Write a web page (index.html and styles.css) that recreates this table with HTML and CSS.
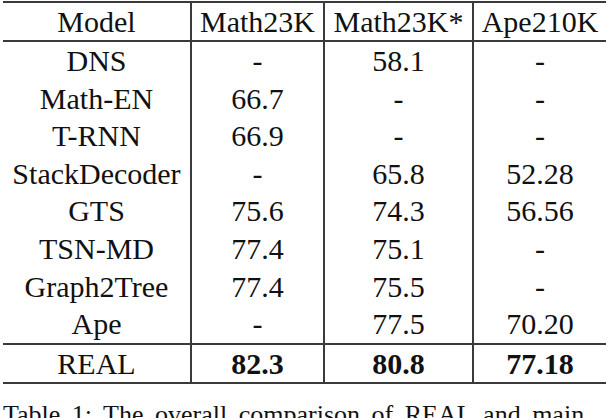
FILE: index.html
```html
<!DOCTYPE html>
<html lang="en">
<head>
    <meta charset="UTF-8">
    <meta name="viewport" content="width=device-width, initial-scale=1.0">
    <title>Results Table</title>
    <link rel="stylesheet" href="styles.css">
</head>
<body>
    <table class="results">
        <thead>
            <tr>
                <th>Model</th>
                <th>Math23K</th>
                <th>Math23K*</th>
                <th>Ape210K</th>
            </tr>
        </thead>
        <tbody>
            <tr><td>DNS</td><td>-</td><td>58.1</td><td>-</td></tr>
            <tr><td>Math-EN</td><td>66.7</td><td>-</td><td>-</td></tr>
            <tr><td>T-RNN</td><td>66.9</td><td>-</td><td>-</td></tr>
            <tr><td>StackDecoder</td><td>-</td><td>65.8</td><td>52.28</td></tr>
            <tr><td>GTS</td><td>75.6</td><td>74.3</td><td>56.56</td></tr>
            <tr><td>TSN-MD</td><td>77.4</td><td>75.1</td><td>-</td></tr>
            <tr><td>Graph2Tree</td><td>77.4</td><td>75.5</td><td>-</td></tr>
            <tr><td>Ape</td><td>-</td><td>77.5</td><td>70.20</td></tr>
            <tr class="ours">
                <td>REAL</td>
                <td class="best">82.3</td>
                <td class="best">80.8</td>
                <td class="best">77.18</td>
            </tr>
        </tbody>
    </table>

    <p class="caption">Table 1: The overall comparison of REAL and main baselines.</p>
</body>
</html>
```

FILE: styles.css
```css
body {
    margin: 0;
    padding: 1px 4px 0 3px;
    font-family: "Liberation Serif", "DejaVu Serif", serif;
    color: #111;
    overflow: hidden;
}
.results {
    border-collapse: collapse;
    border-top: 2px solid #3a3a3a;
    border-bottom: 2px solid #3a3a3a;
    font-family: "Liberation Serif", "DejaVu Serif", serif;
    font-size: 30px;
}
.results th,
.results td {
    padding: 0;
    text-align: center;
    font-weight: 400;
    line-height: 37.6px;
}
.results th {
    line-height: 37px;
    border-bottom: 2px solid #3a3a3a;
}
/* column widths */
.results th:nth-child(1) { width: 187px; }
.results th:nth-child(2) { width: 131px; }
.results th:nth-child(3) { width: 147px; }
.results th:nth-child(4) { width: 132px; }
.results th + th,
.results td + td {
    border-left: 2px solid #3a3a3a;
}
.ours td {
    border-top: 2px solid #3a3a3a;
    line-height: 37px;
}
.results .best {
    font-weight: 700;
}
.caption {
    margin: 16px 0 0;
    font-family: "Liberation Serif", "DejaVu Serif", serif;
    font-size: 26px;
    word-spacing: 5px;
}
```
